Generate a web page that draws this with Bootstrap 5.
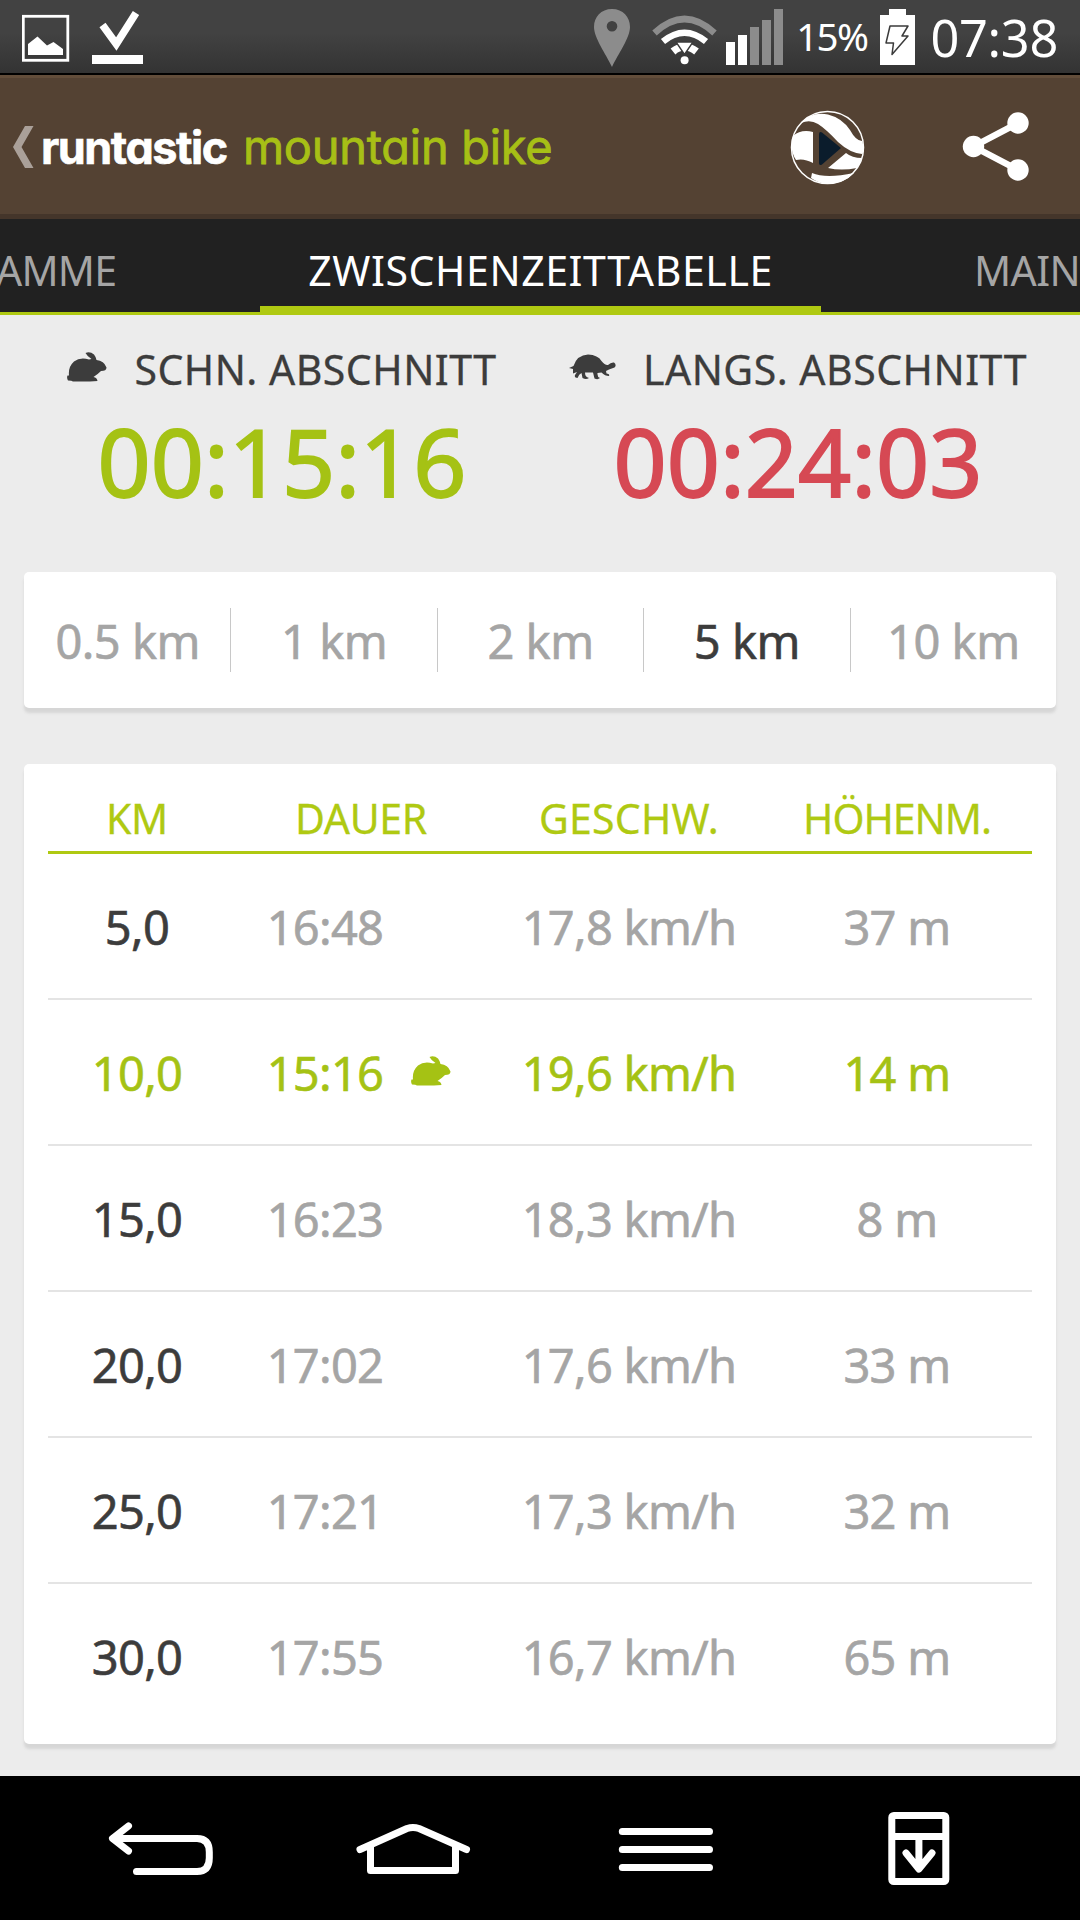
<!DOCTYPE html>
<html lang="de">
<head>
<meta charset="utf-8">
<meta name="viewport" content="width=device-width, initial-scale=1">
<title>runtastic mountain bike</title>
<link href="https://cdn.jsdelivr.net/npm/bootstrap@5.3.0/dist/css/bootstrap.min.css" rel="stylesheet">
<style>
  body { font-family: "Noto Sans", "Open Sans", sans-serif; background: #ececec; color: #3c3c3c; width: 1080px; height: 1920px; overflow: hidden; }
  svg { display: block; flex: none; }
  .statusbar { height: 75px; background: linear-gradient(#424242 0, #424242 45%, #333 100%); border-bottom: 2px solid #000; color: #fff; padding: 0 22px; line-height: 1; }
  .pct { font-size: 38.500px; letter-spacing: -1.6px; margin: 0 13px 0 11px; }
  .clock { font-size: 50.500px; letter-spacing: -.3px; margin-left: 14px; padding-top: 3px; }
  .appbar { height: 144px; background: #544233; border-top: 3px solid #624d3a; border-bottom: 5px solid #44352a; padding: 2px 50px 0 13px; }
  .brand { font-family: Inter, sans-serif; font-feature-settings: "cv11"; font-size: 47px; line-height: 50px; white-space: nowrap; }
  .brand-main { font-weight: 700; color: #fff; width: 202px; font-size: 45px; letter-spacing: -1.5px; margin-left: 7px; padding-top: 2px; -webkit-text-stroke: .6px currentColor; }
  .brand-sub { color: #a7bf16; letter-spacing: -.3px; -webkit-text-stroke: .8px currentColor; }
  .tabstrip { height: 96px; background: #212121; border-bottom: 3px solid #afc912; font-size: 41px; color: #a5a5a5; overflow: hidden; white-space: nowrap; }
  .tabitem { height: 96px; padding-top: 21px; line-height: 60px; flex: none; }
  .tab-prev { width: 260px; text-indent: -4px; letter-spacing: -.8px; }
  .tab-now { width: 561px; color: #fff; border-bottom: 9px solid #afc912; text-align: center; letter-spacing: .6px; }
  .tab-next { width: 259px; padding-left: 153px; letter-spacing: -.6px; }
  .summary { height: 257px; padding: 24px 24px 0; }
  .sum-label { font-size: 41px; line-height: 60px; letter-spacing: .5px; -webkit-text-stroke: .3px currentColor; }
  .sum-time { font-size: 93px; line-height: 100px; margin-top: 12px; -webkit-text-stroke: 1.8px currentColor; }
  .green { color: #a5c214 !important; }
  .red { color: #d64954; }
  .panel { background: #fff; border-radius: 5px; margin: 0 24px; box-shadow: 0 5px 3px #d6d6d6; }
  .dist { height: 136px; font-size: 47px; letter-spacing: -.5px; color: #a5a5a5; padding-left: 1px; }
  .dist > div { flex: 1; height: 64px; line-height: 66px; text-align: center; -webkit-text-stroke: .6px currentColor; }
  .dist > div + div { border-left: 1px solid #c8c8c8; }
  .dist .active { color: #3c3c3c; }
  .laps { height: 980px; margin-top: 56px; padding: 0 24px; }
  .lap { display: grid; grid-template-columns: 178px 270px 266px 270px; height: 146px; align-items: center; text-align: center; font-size: 47px; letter-spacing: -.7px; color: #a5a5a5; border-bottom: 2px solid #e4e4e4; padding-top: 2px; -webkit-text-stroke: .6px currentColor; }
  .lap:last-child { border-bottom-color: transparent; }
  .lap > :first-child { color: #3c3c3c; }
  .laphead { height: 90px; font-size: 41px; letter-spacing: -.3px; padding-top: 22px; border-bottom: 3px solid #afc912; -webkit-text-stroke: .3px currentColor; }
  .laphead, .laphead > :first-child { color: #afc912; }
  .laphead > :last-child { letter-spacing: -1px; }
  .laphead > :nth-child(3) { letter-spacing: .2px; }
  .gap30 { gap: 27px; }
  .lap .gap30 { padding-right: 4px; gap: 28px; }
  .navkeys { height: 144px; margin-top: 32px; background: #000; padding: 0 35px; }
</style>
<script src="https://cdn.jsdelivr.net/npm/bootstrap@5.3.0/dist/js/bootstrap.bundle.min.js"></script>
</head>
<body>
<svg width="0" height="0" class="position-absolute">
  <symbol id="rabbit" viewBox="0 0 40 30"><path d="M2 23.500 Q1 15 7 9.500 Q13 5 22 7.500 L24.500 7 Q20 4 18.500 1 Q23 -.8 27 2.500 Q29 5 29.500 8 Q37 8.500 39.500 15.500 Q39.500 19 34 19 Q31 22 26.500 25 Q30 25.500 30.500 29 L23 29.500 L6 29.500 Q5 28.500 1 28.500 Q-.5 26 .5 23.500Z"/></symbol>
  <symbol id="turtle" viewBox="0 0 47 26"><path d="M0 14 L4.500 12 Q8 1 19 .5 Q29 1 32.500 7 Q36 11.500 39 11 Q42 8 45 8.500 Q48 11 45.500 13.500 L40 15.500 L37 17 L37.500 19.500 Q41 19.500 40 22 Q36 22 32.500 18.500 L28.500 19 Q28 23 31 24 Q29 26 25.500 24.500 L24 18.500 L16 18.500 Q16 23 20 24 Q17 26 13.500 24 L12.500 19 Q10 20 8.500 24 Q5 24 6 21 L8 18 L4 19.500 L4 15Z"/></symbol>
</svg>

<header class="statusbar d-flex align-items-center justify-content-between">
  <svg width="122" height="73" viewBox="22 0 122 73" fill="#fff">
    <rect x="23.300" y="16.300" width="44.500" height="44" fill="none" stroke="#fff" stroke-width="2.800"/>
    <path d="M28 55V44L37.500 36.500 47 45.500 53.500 42 63 49V55Z"/>
    <path d="M102.500 25 116.300 44 136 13" fill="none" stroke="#fff" stroke-width="7.500"/><rect x="92" y="55" width="51" height="9"/>
  </svg>
  <div class="d-flex align-items-center">
    <svg width="191" height="73" viewBox="593 0 191 73" fill="#8c8c8c">
      <path fill-rule="evenodd" d="M611 9C600 9 593 17 593 27C593 38 605 54 611 67C617 54 629 38 629 27C629 17 622 9 611 9ZM611 21a5.300 5.300 0 1 1 0 10.600a5.300 5.300 0 0 1 0-10.600Z"/>
      <g fill="none" stroke-width="6.500"><path stroke="#8c8c8c" d="M653.500 33Q683.500 5 713.500 33"/><path stroke="#fff" d="M662 41.500Q683.500 24 705 41.500"/><path stroke="#fff" stroke-width="7.500" d="M672 51.500Q683.500 42 695.500 51.500"/></g>
      <circle cx="683.600" cy="60.300" r="4" fill="#fff"/><path fill="#fff" stroke="#3b3b3b" stroke-width="1.400" d="M675 42H692L683.500 54.500Z"/>
      <path fill="#fff" d="M725 42h9v23h-9zM737 35h9v30h-9z"/><path d="M749 27h9v38h-9zM761 20h9v45h-9zM773 9h9v56h-9z"/>
    </svg>
    <span class="pct">15%</span>
    <svg width="36" height="73" viewBox="880 0 36 73"><path fill="#fff" d="M889 9h17v6h9v50h-35V15h9z"/><path d="M890 26h18l-6 10h6L892 54.500 893.500 43H886Z" fill="none" stroke="#3b3b3b" stroke-width="1.500" stroke-linejoin="round"/></svg>
    <span class="clock">07:38</span>
  </div>
</header>

<nav class="appbar d-flex align-items-center justify-content-between">
  <div class="brand d-flex align-items-center">
    <svg width="21" height="42" viewBox="0 0 21 42"><path d="M12 0H20.500L8.500 21 20.500 42H12L0 21Z" fill="#aaa099"/></svg>
    <span class="brand-main">runtastic</span>
    <span class="brand-sub">mountain bike</span>
  </div>
  <svg width="240" height="76" viewBox="790 109 240 76">
    <circle cx="827.500" cy="147.500" r="36" fill="none" stroke="#fff" stroke-width="1.500"/>
    <g fill="#fff">
      <path d="M801 123Q812 111 828 114.500Q842 118 850 130Q856 141 862 141Q866 152 862 154Q850 153 838 142Q826 129 818 124Q810 119 801 123Z"/>
      <path d="M793 136Q801 129 813 132V163Q804 158 796 160Q789 149 793 136Z"/>
      <path d="M828 168 846 153Q852 158 862 158Q860 164 857 168Q841 171 828 168Z"/>
      <path d="M812 173Q826 179 854 173Q844 184 827 184Q818 183 811 178Z"/>
    </g>
    <path d="M819 134.500Q819 131 822 132.500L841 148 822 164.500Q819 166 819 163Z" fill="#0b1c2c"/>
    <g fill="#fff"><circle cx="973.500" cy="146.500" r="10.700"/><circle cx="1018" cy="123" r="10.700"/><circle cx="1018" cy="170" r="10.700"/></g>
    <path d="M1018 123 973.500 146.500 1018 170" fill="none" stroke="#fff" stroke-width="6.500"/>
  </svg>
</nav>

<div class="tabstrip d-flex">
  <div class="tabitem tab-prev">AMME</div>
  <div class="tabitem tab-now">ZWISCHENZEITTABELLE</div>
  <div class="tabitem tab-next">MAIN</div>
</div>

<section class="summary d-flex">
  <div class="w-50 text-center">
    <div class="sum-label d-flex justify-content-center align-items-center gap30"><svg width="40" height="30" fill="#3c3c3c" stroke="none" class="mb-1"><use href="#rabbit"/></svg><span>SCHN. ABSCHNITT</span></div>
    <div class="sum-time green">00:15:16</div>
  </div>
  <div class="w-50 text-center">
    <div class="sum-label d-flex justify-content-center align-items-center gap30"><svg width="47" height="26" fill="#3c3c3c" stroke="none" class="mb-1"><use href="#turtle"/></svg><span>LANGS. ABSCHNITT</span></div>
    <div class="sum-time red">00:24:03</div>
  </div>
</section>

<section class="panel dist d-flex align-items-center">
  <div>0.5 km</div><div>1 km</div><div>2 km</div><div class="active">5 km</div><div>10 km</div>
</section>

<section class="panel laps">
  <div class="lap laphead"><div>KM</div><div>DAUER</div><div>GESCHW.</div><div>HÖHENM.</div></div>
  <div class="lap"><div>5,0</div><div class="d-flex justify-content-center align-items-center gap30">16:48<svg class="invisible" width="40" height="30"></svg></div><div>17,8 km/h</div><div>37 m</div></div>
  <div class="lap green"><div class="green">10,0</div><div class="d-flex justify-content-center align-items-center gap30">15:16<svg width="40" height="30" fill="#a5c214" stroke="none" class="mb-1"><use href="#rabbit"/></svg></div><div>19,6 km/h</div><div>14 m</div></div>
  <div class="lap"><div>15,0</div><div class="d-flex justify-content-center align-items-center gap30">16:23<svg class="invisible" width="40" height="30"></svg></div><div>18,3 km/h</div><div>8 m</div></div>
  <div class="lap"><div>20,0</div><div class="d-flex justify-content-center align-items-center gap30">17:02<svg class="invisible" width="40" height="30"></svg></div><div>17,6 km/h</div><div>33 m</div></div>
  <div class="lap"><div>25,0</div><div class="d-flex justify-content-center align-items-center gap30">17:21<svg class="invisible" width="40" height="30"></svg></div><div>17,3 km/h</div><div>32 m</div></div>
  <div class="lap"><div>30,0</div><div class="d-flex justify-content-center align-items-center gap30">17:55<svg class="invisible" width="40" height="30"></svg></div><div>16,7 km/h</div><div>65 m</div></div>
</section>

<footer class="navkeys d-flex">
  <svg width="252.500" height="144" viewBox="35 1776 252.500 144" fill="none" stroke="#fff" stroke-width="7" stroke-linecap="round" stroke-linejoin="round"><path d="M128.500 1826 112.500 1838.500 128.500 1851M113 1838.500H197Q209.300 1838.500 209.300 1852V1858Q209.300 1871.500 197 1871.500H136.500"/></svg>
  <svg width="252.500" height="144" viewBox="288 1776 252.500 144" fill="none" stroke="#fff" stroke-width="7" stroke-linecap="round" stroke-linejoin="round"><path d="M360 1849.500 407 1828.500Q413 1826.500 419 1828.500L466.500 1849.500M370.500 1847V1870.500H455.500V1847"/></svg>
  <svg width="252.500" height="144" viewBox="540 1776 252.500 144" fill="none" stroke="#fff" stroke-width="7" stroke-linecap="round"><path d="M622.300 1831.500H709.500M622.300 1849.500H709.500M622.300 1867.500H709.500"/></svg>
  <svg width="252.500" height="144" viewBox="792.500 1776 252.500 144" fill="none" stroke="#fff" stroke-width="7" stroke-linecap="round" stroke-linejoin="round"><rect x="891.300" y="1815.500" width="54" height="66" rx="2"/><path d="M892 1836.500H945M918.400 1837V1868M905.500 1853 918.400 1869 931.500 1853"/></svg>
</footer>
</body>
</html>
